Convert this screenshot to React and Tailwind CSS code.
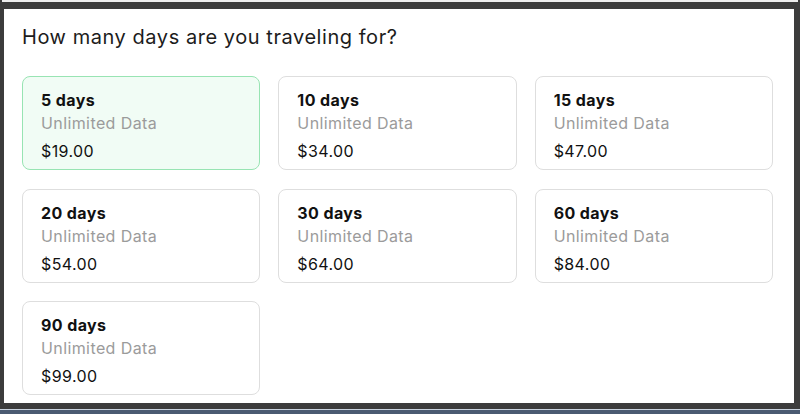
const plans = [
  { days: 5, price: '$19.00' },
  { days: 10, price: '$34.00' },
  { days: 15, price: '$47.00' },
  { days: 20, price: '$54.00' },
  { days: 30, price: '$64.00' },
  { days: 60, price: '$84.00' },
  { days: 90, price: '$99.00' },
];

const PlanCard = ({ days, price, selected }) => (
  <div
    className={
      'h-[94px] rounded-lg border pl-[18px] pt-[12px] tracking-[0.4px] ' +
      (selected ? 'border-[#98e4b3] bg-[#f1fcf5]' : 'border-[#dedede] bg-white')
    }
  >
    <div className="text-[16px] font-bold leading-[23px] text-[#111]">{days} days</div>
    <div className="text-[16px] leading-[23px] text-[#9b9b9b]">Unlimited Data</div>
    <div className="mt-[5px] text-[16px] leading-[23px] text-[#111]">{price}</div>
  </div>
);

export default function App() {
  return (
    <div className="flex h-[414px] w-[800px] flex-col bg-[#3c3c3c] font-['Inter',sans-serif]">
      <div className="mx-[2px] h-[2px] bg-[#eeeeee]" />
      <div className="ml-[4px] mr-[6px] mt-[7px] h-[394px] bg-white pl-[18px] pr-[21px] pt-[14px]">
        <h1 className="text-[20px] leading-7 tracking-[0.55px] text-[#1c1c1c]">How many days are you traveling for?</h1>
        <div className="mt-[25px] grid grid-cols-3 gap-x-[18px] gap-y-[18.5px]">
          {plans.map((p, i) => (
            <PlanCard key={p.days} days={p.days} price={p.price} selected={i === 0} />
          ))}
        </div>
      </div>
      <div className="mt-[6px] flex-1 border-t border-[#c9d3df] bg-[#4b5b72]" />
    </div>
  );
}
